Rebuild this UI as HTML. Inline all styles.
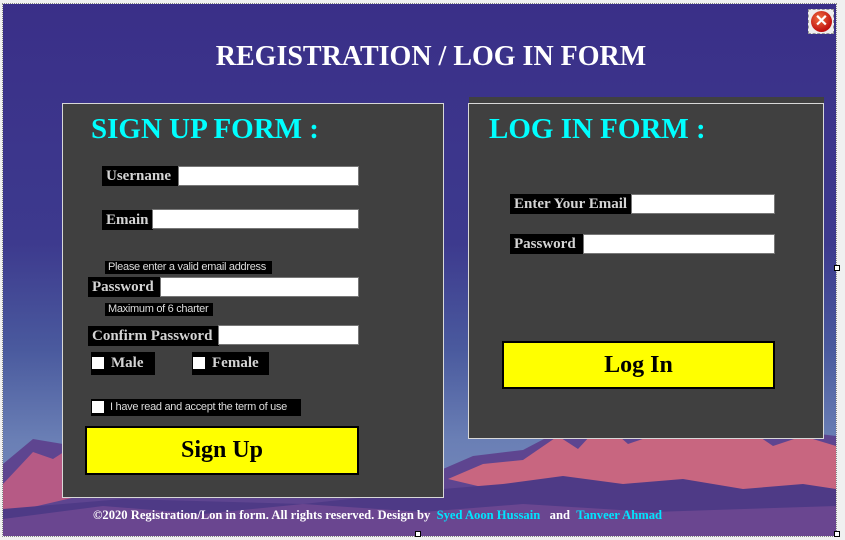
<!DOCTYPE html>
<html><head><meta charset="utf-8"><style>
*{margin:0;padding:0;box-sizing:border-box}
body{width:845px;height:540px;background:#f0f0f0;position:relative;overflow:hidden;font-family:"Liberation Serif",serif}
#bg{position:absolute;left:3px;top:4px;width:833px;height:532px;background:linear-gradient(#3a2f88 0%,#3d3a8e 45%,#4a5a9e 65%,#6a7fb5 82%,#7a8cbc 100%);overflow:hidden;outline:1px dotted #888}
.a{position:absolute}
.panel{position:absolute;background:#404040;border:1px solid #d8d8d8}
.lbl{position:absolute;background:#000;color:#d4d4d4;font-weight:bold;font-size:15px;line-height:20px;padding-left:4px;white-space:nowrap}
.in{position:absolute;background:#fff;border:1px solid #777;height:20px}
.hint{position:absolute;background:#000;color:#ddd;font-family:"Liberation Sans",sans-serif;font-size:11px;line-height:13px;padding-left:3px;white-space:nowrap;letter-spacing:-0.3px}
.cb{position:absolute;background:#fff;width:12px;height:12px}
.h{position:absolute;color:#00ffff;font-weight:bold;font-size:29px;white-space:nowrap}
.btn{position:absolute;background:#ff0;border:2px solid #000;font-weight:bold;font-size:24px;text-align:center;color:#000}
</style></head><body>
<div id="bg">
<svg class="a" style="left:0;top:380px" width="833" height="152" viewBox="0 0 833 152">
<polygon fill="#5e4590" points="0,80 30,55 60,60 100,45 140,70 200,80 300,85 440,85 470,72 520,66 560,45 600,35 620,50 650,40 690,25 720,42 760,35 800,48 833,52 833,152 0,152"/>
<polygon fill="#b65a85" points="0,100 30,68 50,75 70,62 95,70 120,85 150,95 0,130"/>
<polygon fill="#c86680" points="445,95 480,80 520,76 555,52 575,65 600,38 625,60 660,48 690,30 712,55 745,45 770,62 800,52 833,62 833,110 760,105 700,115 640,105 580,112 500,108"/>
<polygon fill="#4e3a86" points="440,105 500,100 560,92 620,100 680,95 740,105 800,100 833,105 833,152 0,152 0,125 120,115 300,120"/>
<polygon fill="#6a4690" points="0,135 100,122 200,130 300,120 420,128 520,120 650,128 833,122 833,152 0,152"/>
</svg>
<div class="a" style="left:0;top:37px;width:856px;text-align:center;color:#fff;font-weight:bold;font-size:28px">REGISTRATION / LOG IN FORM</div>
<div class="a" style="left:805px;top:5px;width:26px;height:25px;border:1px dashed #999;background:#eee"></div>
<div class="a" style="left:808px;top:7px;width:21px;height:21px;border-radius:50%;background:radial-gradient(circle at 40% 35%,#f07040,#c01010 70%);color:#fff;font:bold 16px/21px 'Liberation Sans',sans-serif;text-align:center">✕</div>
</div>

<div class="panel" style="left:62px;top:103px;width:382px;height:395px"></div>
<div class="a" style="left:469px;top:97px;width:355px;height:6px;background:#404040"></div>
<div class="panel" style="left:468px;top:103px;width:356px;height:336px"></div>

<div class="h" style="left:91px;top:113px">SIGN UP FORM :</div>
<div class="h" style="left:489px;top:113px">LOG IN FORM :</div>

<div class="lbl" style="left:102px;top:166px;width:77px">Username</div><div class="in" style="left:178px;top:166px;width:181px"></div>
<div class="lbl" style="left:102px;top:210px;width:51px">Emain</div><div class="in" style="left:152px;top:209px;width:207px"></div>
<div class="hint" style="left:105px;top:261px;width:167px">Please enter a valid email address</div>
<div class="lbl" style="left:88px;top:277px;width:73px">Password</div><div class="in" style="left:160px;top:277px;width:199px"></div>
<div class="hint" style="left:105px;top:303px;width:108px">Maximum of 6 charter</div>
<div class="lbl" style="left:88px;top:326px;width:131px">Confirm Password</div><div class="in" style="left:218px;top:325px;width:141px"></div>
<div class="lbl" style="left:91px;top:352px;width:64px;height:23px;padding-left:20px;line-height:22px">Male</div><div class="cb" style="left:92px;top:357px"></div>
<div class="lbl" style="left:192px;top:352px;width:77px;height:23px;padding-left:20px;line-height:22px">Female</div><div class="cb" style="left:193px;top:357px"></div>
<div class="hint" style="left:91px;top:399px;width:210px;height:17px;line-height:17px;padding-left:19px">I have read and accept the term of use</div><div class="cb" style="left:92px;top:401px"></div>
<div class="btn" style="left:85px;top:426px;width:274px;height:49px;line-height:45px">Sign Up</div>

<div class="lbl" style="left:510px;top:194px;width:122px">Enter Your Email</div><div class="in" style="left:631px;top:194px;width:144px"></div>
<div class="lbl" style="left:510px;top:234px;width:74px">Password</div><div class="in" style="left:583px;top:234px;width:192px"></div>
<div class="btn" style="left:502px;top:341px;width:273px;height:48px;line-height:44px">Log In</div>

<div class="a" style="left:93px;top:508px;font-size:12.6px;font-weight:bold;color:#fff;white-space:nowrap">©2020 Registration/Lon in form. All rights reserved. Design by &nbsp;<span style="color:#00e5ff">Syed Aoon Hussain</span> &nbsp; and &nbsp;<span style="color:#00e5ff">Tanveer Ahmad</span></div>
<div class="a" style="left:415px;top:531px;width:6px;height:6px;background:#fff;border:1px solid #000"></div>
<div class="a" style="left:834px;top:265px;width:6px;height:6px;background:#fff;border:1px solid #000"></div>
<div class="a" style="left:834px;top:531px;width:6px;height:6px;background:#fff;border:1px solid #000"></div>
</body></html>
